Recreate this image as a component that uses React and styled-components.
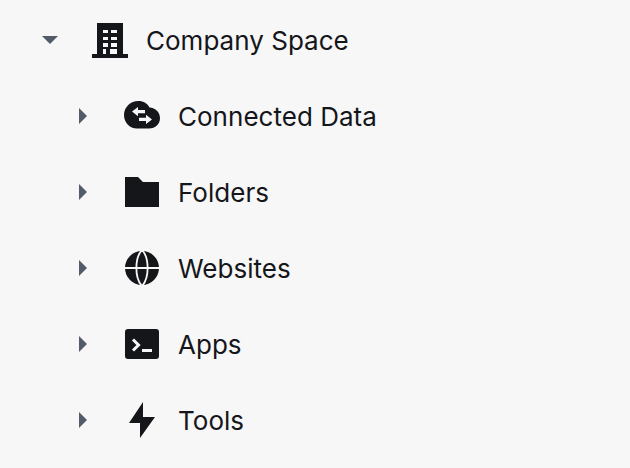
import React from "react";
import styled, { createGlobalStyle } from "styled-components";

const GlobalStyle = createGlobalStyle`
  html, body {
    margin: 0;
    background: #f7f7f7;
  }
`;

const Tree = styled.ul`
  list-style: none;
  margin: 0;
  padding: 2px 0 0;
  width: 630px;
  height: 466px;
  overflow: hidden;
  font-family: Inter, "Liberation Sans", sans-serif;
  color: #14161a;
`;

const Row = styled.li`
  display: flex;
  align-items: center;
  height: 76px;
  padding-left: ${(p) => (p.$level ? 67 : 34)}px;
`;

const Caret = styled.span`
  display: flex;
  justify-content: center;
  align-items: center;
  flex: none;
  width: 32px;
  height: 32px;
  color: #535b6b;
`;

const IconSlot = styled.span`
  display: flex;
  justify-content: center;
  align-items: center;
  flex: none;
  width: 36px;
  height: 36px;
  margin-left: ${(p) => (p.$level ? 25 : 26)}px;
`;

const Label = styled.span`
  margin-left: 18px;
  padding-top: 2px;
  font-size: 26px;
  line-height: 36px;
  letter-spacing: 0.02px;
  white-space: nowrap;
`;

const CaretDown = () => (
  <svg width="16" height="8" viewBox="0 0 16 8"><path d="M0 0h16L8 8z" fill="currentColor" /></svg>
);

const CaretRight = () => (
  <svg width="8" height="16" viewBox="0 0 8 16"><path d="M0 0l8 8-8 8z" fill="currentColor" /></svg>
);

const BuildingIcon = () => (
  <svg width="36" height="36" viewBox="0 0 36 36">
    <path
      fill="#14161a"
      fillRule="evenodd"
      d="M5 1h26v31h5v4H0v-4h5zM11 8v3h5V8zm8 0v3h6V8zM11 15v3h5v-3zm8 0v3h6v-3zM11 21v4h5v-4zm8 0v4h6v-4zM11 27v5h3v-5zm7 0v5h7v-5z"
    />
  </svg>
);

const CloudIcon = () => (
  <svg width="36" height="36" viewBox="0 0 36 36">
    <path
      fill="#14161a"
      d="M14.500 3c5 0 9 2.400 11 6.500 6 .5 10.500 4.700 10.500 10.500 0 6-4.500 10.500-11 10.500H13C5.500 30.500 0 24.500 0 17 0 9.200 6.500 3 14.500 3z"
    />
    <path fill="#f7f7f7" d="M8 13.500l6-4.500v3h7v3.200h-7v3zM28 21.500l-6 4.500v-3h-7v-3.200h7v-3z" />
  </svg>
);

const FolderIcon = () => (
  <svg width="36" height="36" viewBox="0 0 36 36">
    <path fill="#14161a" d="M1 3h13l5 5h16v25H1z" />
  </svg>
);

const GlobeIcon = () => (
  <svg width="36" height="36" viewBox="0 0 36 36">
    <circle cx="18" cy="18" r="17" fill="#14161a" />
    <path d="M0 18h36" stroke="#f7f7f7" strokeWidth="2" />
    <path
      d="M18 0C10.500 8 10.500 28 18 36C25.500 28 25.500 8 18 0z"
      fill="none"
      stroke="#f7f7f7"
      strokeWidth="1.800"
    />
  </svg>
);

const TerminalIcon = () => (
  <svg width="36" height="36" viewBox="0 0 36 36">
    <rect x="1" y="3" width="34" height="30" rx="3" fill="#14161a" />
    <path d="M9 13.500l5.500 5.500L9 24.500" fill="none" stroke="#f7f7f7" strokeWidth="3" />
    <path d="M18 24.500h10" stroke="#f7f7f7" strokeWidth="3" />
  </svg>
);

const BoltIcon = () => (
  <svg width="36" height="36" viewBox="0 0 36 36">
    <path fill="#14161a" d="M19 0L5 21h11v15l15-21H19z" />
  </svg>
);

const items = [
  { label: "Connected Data", Icon: CloudIcon },
  { label: "Folders", Icon: FolderIcon },
  { label: "Websites", Icon: GlobeIcon },
  { label: "Apps", Icon: TerminalIcon },
  { label: "Tools", Icon: BoltIcon },
];

export default function App() {
  return (
    <>
      <GlobalStyle />
      <Tree>
        <Row>
          <Caret><CaretDown /></Caret>
          <IconSlot><BuildingIcon /></IconSlot>
          <Label>Company Space</Label>
        </Row>
        {items.map(({ label, Icon }) => (
          <Row key={label} $level={1}>
            <Caret><CaretRight /></Caret>
            <IconSlot $level={1}><Icon /></IconSlot>
            <Label>{label}</Label>
          </Row>
        ))}
      </Tree>
    </>
  );
}
